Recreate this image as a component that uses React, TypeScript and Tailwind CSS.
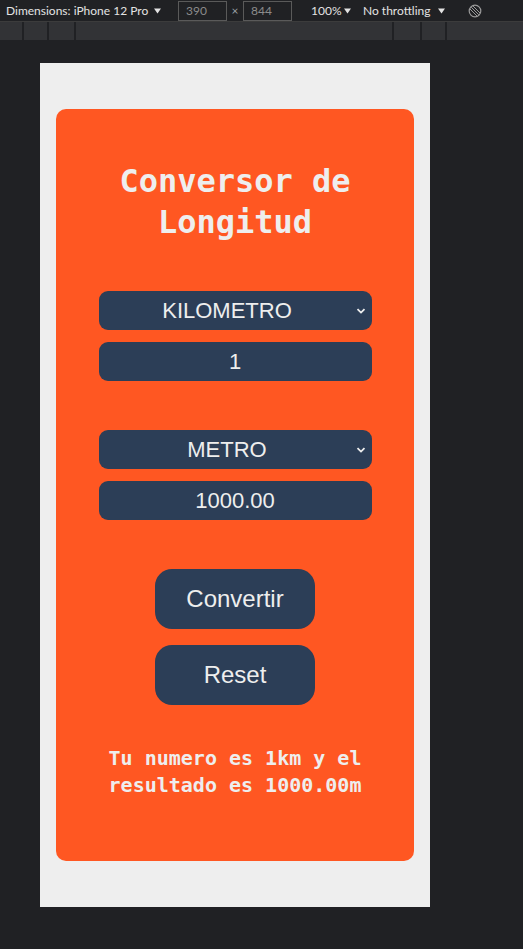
import React, { useState } from 'react';

const mono = { fontFamily: '"DejaVu Sans Mono", "Liberation Mono", monospace' };

function Chevron() {
  return (
    <svg width="10" height="6" viewBox="0 0 10 6" className="pointer-events-none absolute right-[6px] top-[17px]">
      <path d="M1.5 1.2 L5 4.6 L8.5 1.2" fill="none" stroke="#eeeeee" strokeWidth="1.8" />
    </svg>
  );
}

function Caret() {
  return (
    <svg width="7" height="6" viewBox="0 0 7 6" className="shrink-0">
      <path d="M0 0.5 H7 L3.5 5.5 Z" fill="#e3e3e3" />
    </svg>
  );
}

function UnitSelect({ value }: { value: string }) {
  return (
    <div className="relative w-[273px] h-[39px]">
      <select
        defaultValue={value}
        className="w-full h-full appearance-none rounded-[9px] bg-[#2c3e57] text-[#eeeeee] text-[22px] pr-[16px] text-center [text-align-last:center] outline-none font-['Liberation_Sans',Arial,sans-serif]"
      >
        <option>KILOMETRO</option>
        <option>METRO</option>
        <option>CENTIMETRO</option>
        <option>MILIMETRO</option>
      </select>
      <Chevron />
    </div>
  );
}

function ValueBox({ value }: { value: string }) {
  return (
    <input
      readOnly
      value={value}
      className="w-[273px] h-[39px] rounded-[9px] bg-[#2c3e57] text-[#eeeeee] text-[22px] text-center outline-none font-['Liberation_Sans',Arial,sans-serif]"
    />
  );
}

export default function App() {
  const [n] = useState('1');

  return (
    <div className="w-[523px] h-[949px] bg-[#202124] overflow-hidden font-['Lato','Open_Sans',sans-serif]">
      {/* devtools device toolbar */}
      <div className="h-[22px] flex items-center text-[12px] text-[#e3e3e3] border-b border-[#3c3c3c]">
        <span className="ml-[6px] w-[148px] whitespace-nowrap overflow-hidden">Dimensions: iPhone 12 Pro</span>
        <Caret />
        <div className="ml-[17px] w-[49px] h-[20px] border border-[#5a5a5a] text-[#8b8b8b] pl-[7px] leading-[18px]">390</div>
        <span className="w-[16px] text-center text-[#9aa0a6] text-[12px]">×</span>
        <div className="w-[49px] h-[20px] border border-[#5a5a5a] text-[#8b8b8b] pl-[7px] leading-[18px]">844</div>
        <span className="ml-[19px] w-[33px] whitespace-nowrap">100%</span>
        <Caret />
        <span className="ml-[12px] w-[75px] whitespace-nowrap">No throttling</span>
        <Caret />
        <svg width="14" height="14" viewBox="0 0 14 14" className="ml-[23px]">
          <circle cx="7" cy="7" r="5.8" fill="none" stroke="#9a9a9a" strokeWidth="1.2" />
          <path d="M3.2 3.2 L10.8 10.8 M5 2 L12 9 M2 5 L9 12" stroke="#9a9a9a" strokeWidth="1" />
        </svg>
      </div>
      <div className="h-[18px] bg-[#323336] flex">
        <div className="w-[24px] border-r-2 border-[#202124]" />
        <div className="w-[25px] border-r-2 border-[#202124]" />
        <div className="w-[27px] border-r-2 border-[#202124]" />
        <div className="w-[318px] border-r-2 border-[#202124]" />
        <div className="w-[28px] border-r-2 border-[#202124]" />
        <div className="w-[25px] border-r-2 border-[#202124]" />
        <div className="flex-1" />
      </div>

      {/* device viewport */}
      <div className="ml-[40px] mt-[23px] w-[390px] h-[844px] bg-[#eeeeee] pt-[46px] px-[16px]">
        <div className="h-[752px] rounded-[10px] bg-[#ff5722] flex flex-col items-center text-[#eeeeee]">
          <h1 style={mono} className="mt-[52px] text-[32px] leading-[41px] font-bold text-center">
            Conversor de
            <br />
            Longitud
          </h1>

          <div className="mt-[48px] flex flex-col gap-[12px]">
            <UnitSelect value="KILOMETRO" />
            <ValueBox value={n} />
          </div>

          <div className="mt-[49px] flex flex-col gap-[12px]">
            <UnitSelect value="METRO" />
            <ValueBox value="1000.00" />
          </div>

          <div className="mt-[49px] flex flex-col gap-[16px]">
            <button className="w-[160px] h-[60px] rounded-[17px] bg-[#2c3e57] text-[24px] text-[#eeeeee] font-['Liberation_Sans',Arial,sans-serif]">
              Convertir
            </button>
            <button className="w-[160px] h-[60px] rounded-[17px] bg-[#2c3e57] text-[24px] text-[#eeeeee] font-['Liberation_Sans',Arial,sans-serif]">
              Reset
            </button>
          </div>

          <p style={mono} className="mt-[40px] text-[20px] leading-[27px] font-bold text-center">
            Tu numero es 1km y el
            <br />
            resultado es 1000.00m
          </p>
        </div>
      </div>
    </div>
  );
}
